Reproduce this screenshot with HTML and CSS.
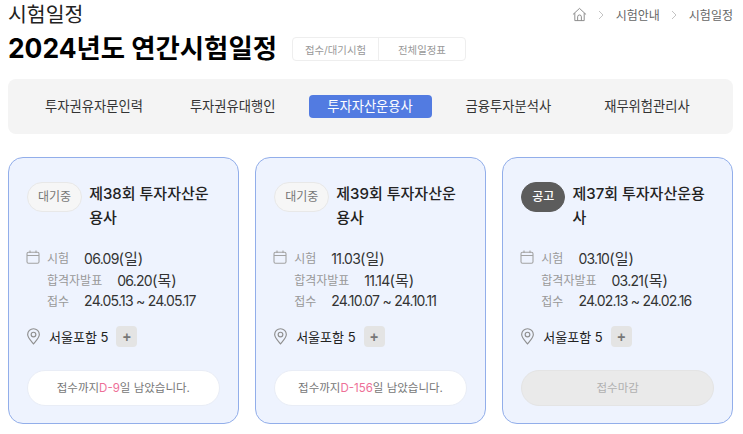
FILE: index.html
```html
<!DOCTYPE html>
<html lang="ko">
<head>
    <meta charset="UTF-8">
    <meta name="viewport" content="width=device-width, initial-scale=1.0">
    <title>시험일정</title>
    <link rel="stylesheet" href="styles.css">
</head>
<body>
    <main class="page">
        <header class="top">
            <h2 class="top-sub">시험일정</h2>
            <nav class="crumbs">
                <svg class="crumbs-home" viewBox="0 0 16 16" width="15" height="15" fill="none" stroke="#888" stroke-width="1">
                    <path d="M1 8 8 1.5 15 8M3 6.5V14.5H13V6.5M6 14.5V10.5A2 2 0 0 1 10 10.5V14.5"/>
                </svg>
                <svg class="crumbs-sep" viewBox="0 0 6 10" width="6" height="10" fill="none" stroke="#c4c4c4"><path d="M1 1 5 5 1 9"/></svg>
                <span>시험안내</span>
                <svg class="crumbs-sep" viewBox="0 0 6 10" width="6" height="10" fill="none" stroke="#c4c4c4"><path d="M1 1 5 5 1 9"/></svg>
                <span>시험일정</span>
            </nav>
        </header>

        <div class="heading">
            <h1>2024년도 연간시험일정</h1>
            <div class="toggle">
                <a class="toggle-item toggle-first">접수/대기시험</a>
                <a class="toggle-item toggle-second">전체일정표</a>
            </div>
        </div>

        <ul class="tabs">
            <li class="tab tab-1">투자권유자문인력</li>
            <li class="tab tab-2">투자권유대행인</li>
            <li class="tab tab-3 is-active">투자자산운용사</li>
            <li class="tab tab-4">금융투자분석사</li>
            <li class="tab tab-5">재무위험관리사</li>
        </ul>

        <section class="cards">
            <article class="card">
                <div class="card-head">
                    <span class="badge">대기중</span>
                    <h3>제38회 투자자산운용사</h3>
                </div>
                <div class="dates">
                    <svg class="icon-cal" viewBox="0 0 14 14" width="14" height="14" fill="none" stroke="#a3a3a3" stroke-width="1.1"><rect x="1" y="2.2" width="12" height="11" rx="1.5"/><path d="M1 5.5H13M4 .5V3M10 .5V3"/></svg>
                    <dl>
                        <div class="row"><dt>시험</dt><dd>06.09<span class="day">(일)</span></dd></div>
                        <div class="row"><dt>합격자발표</dt><dd>06.20<span class="day">(목)</span></dd></div>
                        <div class="row"><dt>접수</dt><dd>24.05.13 ~ 24.05.17</dd></div>
                    </dl>
                </div>
                <div class="place">
                    <svg class="icon-pin" viewBox="0 0 14 16" width="15" height="17" fill="none" stroke="#8f8f8f" stroke-width="1.1"><path d="M7 15C4 11.5 1.5 9 1.5 6.2A5.5 5.5 0 0 1 12.5 6.2C12.5 9 10 11.5 7 15Z"/><circle cx="7" cy="6.2" r="2.2"/></svg>
                    <span>서울포함 5</span>
                    <button class="more">+</button>
                </div>
                <div class="status">접수까지<em>D-9</em>일 남았습니다.</div>
            </article>

            <article class="card">
                <div class="card-head">
                    <span class="badge">대기중</span>
                    <h3>제39회 투자자산운용사</h3>
                </div>
                <div class="dates">
                    <svg class="icon-cal" viewBox="0 0 14 14" width="14" height="14" fill="none" stroke="#a3a3a3" stroke-width="1.1"><rect x="1" y="2.2" width="12" height="11" rx="1.5"/><path d="M1 5.5H13M4 .5V3M10 .5V3"/></svg>
                    <dl>
                        <div class="row"><dt>시험</dt><dd>11.03<span class="day">(일)</span></dd></div>
                        <div class="row"><dt>합격자발표</dt><dd>11.14<span class="day">(목)</span></dd></div>
                        <div class="row"><dt>접수</dt><dd>24.10.07 ~ 24.10.11</dd></div>
                    </dl>
                </div>
                <div class="place">
                    <svg class="icon-pin" viewBox="0 0 14 16" width="15" height="17" fill="none" stroke="#8f8f8f" stroke-width="1.1"><path d="M7 15C4 11.5 1.5 9 1.5 6.2A5.5 5.5 0 0 1 12.5 6.2C12.5 9 10 11.5 7 15Z"/><circle cx="7" cy="6.2" r="2.2"/></svg>
                    <span>서울포함 5</span>
                    <button class="more">+</button>
                </div>
                <div class="status">접수까지<em>D-156</em>일 남았습니다.</div>
            </article>

            <article class="card">
                <div class="card-head">
                    <span class="badge badge-dark">공고</span>
                    <h3>제37회 투자자산운용사</h3>
                </div>
                <div class="dates">
                    <svg class="icon-cal" viewBox="0 0 14 14" width="14" height="14" fill="none" stroke="#a3a3a3" stroke-width="1.1"><rect x="1" y="2.2" width="12" height="11" rx="1.5"/><path d="M1 5.5H13M4 .5V3M10 .5V3"/></svg>
                    <dl>
                        <div class="row"><dt>시험</dt><dd>03.10<span class="day">(일)</span></dd></div>
                        <div class="row"><dt>합격자발표</dt><dd>03.21<span class="day">(목)</span></dd></div>
                        <div class="row"><dt>접수</dt><dd>24.02.13 ~ 24.02.16</dd></div>
                    </dl>
                </div>
                <div class="place">
                    <svg class="icon-pin" viewBox="0 0 14 16" width="15" height="17" fill="none" stroke="#8f8f8f" stroke-width="1.1"><path d="M7 15C4 11.5 1.5 9 1.5 6.2A5.5 5.5 0 0 1 12.5 6.2C12.5 9 10 11.5 7 15Z"/><circle cx="7" cy="6.2" r="2.2"/></svg>
                    <span>서울포함 5</span>
                    <button class="more">+</button>
                </div>
                <div class="status status-closed">접수마감</div>
            </article>
        </section>
    </main>
</body>
</html>
```

FILE: styles.css
```css
html {
  box-sizing: border-box;
  font-family: Inter, "Noto Sans CJK KR", sans-serif;
  font-size: 16px;
}

*,
*:before,
*:after {
  box-sizing: inherit;
}

body {
  margin: 0;
  color: #222;
  background-color: #fff;
}

.page {
  height: 434px;
  padding: 0 10px 0 8px;
  overflow: hidden;
}

.top {
  display: flex;
  justify-content: space-between;
  height: 28px;
}

.top-sub {
  margin: 0;
  font-size: 20.5px;
  font-weight: 400;
  line-height: 30px;
}

.crumbs {
  display: flex;
  align-items: center;
  height: 29px;
  font-size: 12px;
  color: #666;
}

.crumbs-home {
  margin-right: 11px;
}

.crumbs-sep {
  margin-right: 12px;
}

.crumbs span + .crumbs-sep {
  margin-left: 11px;
}

.heading {
  display: flex;
  align-items: center;
  height: 37px;
}

.heading h1 {
  margin: 0;
  font-size: 26.4px;
  font-weight: 700;
  color: #000;
}

.toggle {
  display: flex;
  height: 24px;
  margin: 5px 0 0 15px;
  border: 1px solid #eee;
  border-radius: 4px;
  font-size: 10.4px;
  color: #999;
}

.toggle-item {
  display: flex;
  align-items: center;
  justify-content: center;
}

.toggle-first {
  width: 86px;
  border-right: 1px solid #eee;
}

.toggle-second {
  width: 86px;
}

.tabs {
  display: flex;
  align-items: center;
  height: 55px;
  margin: 14px 0 0;
  padding: 0 0 0 37px;
  list-style: none;
  background-color: #f4f4f4;
  border-radius: 8px;
  font-size: 13.3px;
  color: #333;
}

.tab {
  line-height: 23px;
  white-space: nowrap;
}

.tab-1 {
  margin-right: 47px;
}

.tab-2 {
  margin-right: 33px;
}

.tab-3 {
  margin-right: 34px;
}

.tab-4 {
  margin-right: 53px;
}

.tab.is-active {
  width: 123px;
  background-color: #527be1;
  border-radius: 4px;
  color: #fff;
  text-align: center;
}

.cards {
  display: grid;
  grid-template-columns: repeat(3, 1fr);
  gap: 16.5px;
  margin-top: 23px;
}

.card {
  height: 267px;
  padding: 24px 18px 0;
  background-color: #eef3fe;
  border: 1px solid #92aeea;
  border-radius: 15px;
}

.card-head {
  display: flex;
  align-items: flex-start;
  gap: 7px;
  height: 65px;
}

.card-head h3 {
  margin: 0;
  font-size: 15px;
  font-weight: 500;
  line-height: 24px;
  color: #222;
}

.badge {
  flex: none;
  height: 30px;
  padding: 0 10px;
  background-color: #f6f6f6;
  border: 1px solid #e8e8e8;
  border-radius: 15px;
  font-size: 12px;
  line-height: 28px;
  color: #777;
}

.badge-dark {
  background-color: #5c5c5c;
  border-color: #5c5c5c;
  font-weight: 500;
  color: #fff;
}

.dates {
  display: flex;
  gap: 7px;
}

.icon-cal {
  flex: none;
  margin: 3px 0 0 -1px;
}

.dates dl {
  margin: 0;
}

.row {
  display: flex;
  align-items: center;
  gap: 15px;
  height: 21.5px;
  white-space: nowrap;
}

.row dt {
  font-size: 12px;
  color: #999;
}

.row dd {
  margin: 0;
  font-size: 14px;
  letter-spacing: -0.75px;
  color: #333;
}

.day {
  font-size: 15px;
  letter-spacing: 0;
}

.place {
  display: flex;
  align-items: center;
  gap: 8px;
  height: 22px;
  margin-top: 14px;
  font-size: 13px;
  color: #222;
}

.icon-pin {
  margin-left: -1px;
}

.more {
  width: 21px;
  height: 21px;
  padding: 0;
  background-color: #e4e4e4;
  border: 0;
  border-radius: 4px;
  font-size: 14px;
  font-weight: 700;
  color: #777;
}

.status {
  height: 36px;
  margin-top: 22px;
  background-color: #fff;
  border: 1px solid #e9edf6;
  border-radius: 18px;
  font-size: 11.5px;
  line-height: 34px;
  text-align: center;
  color: #777;
}

.status em {
  font-style: normal;
  color: #ee6f97;
}

.status-closed {
  background-color: #eaeaea;
  border-color: #e4e4e4;
  color: #b0b0b0;
}
```
